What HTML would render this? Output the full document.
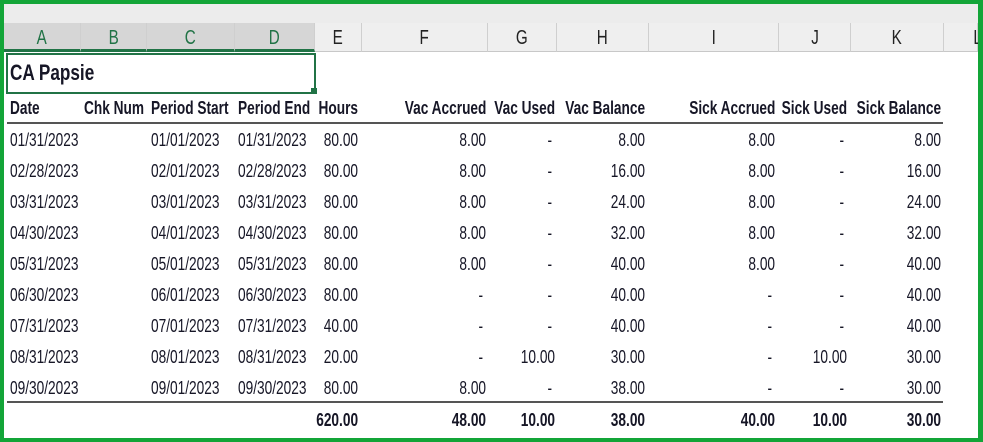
<!DOCTYPE html>
<html><head><meta charset="utf-8"><style>
body{margin:0;width:983px;height:442px;overflow:hidden;background:#fff;font-family:"Liberation Sans Narrow","Liberation Sans",sans-serif;color:#1a1a2a;}
.frame{position:absolute;left:0;top:0;width:983px;height:442px;box-sizing:border-box;border:4px solid #13a538;border-right-width:5px;}
.top{position:absolute;left:4px;top:4px;width:974px;height:19px;background:#ececec;}
.hdr{position:absolute;top:23px;height:29px;background:#efefef;border-bottom:1px solid #c8c8c8;border-right:1px solid #cfcfcf;box-sizing:border-box;text-align:center;font-size:20px;line-height:30px;color:#222;}
.hdr span{display:inline-block;transform:scaleX(0.76);}
.sel{background:#d6d6d6;color:#217346;border-bottom:3px solid #217346;}
.t{position:absolute;font-size:18px;white-space:nowrap;line-height:20px;transform:scaleX(0.76);transform-origin:left center;color:#161626;}
.b{font-weight:bold;}
.r{text-align:right;transform-origin:right center;}
</style></head><body>
<div class="top"></div>
<div class="hdr sel" style="left:4px;width:77px"><span>A</span></div>
<div class="hdr sel" style="left:81px;width:66px"><span>B</span></div>
<div class="hdr sel" style="left:147px;width:88px"><span>C</span></div>
<div class="hdr sel" style="left:235px;width:80px"><span>D</span></div>
<div class="hdr" style="left:315px;width:47px"><span>E</span></div>
<div class="hdr" style="left:362px;width:126px"><span>F</span></div>
<div class="hdr" style="left:488px;width:69px"><span>G</span></div>
<div class="hdr" style="left:557px;width:92px"><span>H</span></div>
<div class="hdr" style="left:649px;width:130px"><span>I</span></div>
<div class="hdr" style="left:779px;width:72px"><span>J</span></div>
<div class="hdr" style="left:851px;width:93px"><span>K</span></div>
<div class="hdr" style="left:944px;width:34px;text-align:left;padding-left:28px"><span>L</span></div>
<div style="position:absolute;left:6px;top:53px;width:306px;height:37px;border:2px solid #217346;"></div>
<div style="position:absolute;left:311px;top:88px;width:6px;height:6px;background:#217346;"></div>
<div class="t b" style="left:10px;top:61px;font-size:22px;line-height:24px;transform:scaleX(0.78)">CA Papsie</div>
<div style="position:absolute;left:7px;top:122px;width:936px;height:2px;background:#555"></div>
<div style="position:absolute;left:7px;top:401px;width:936px;height:2px;background:#555"></div>
<div id="g"></div>
<script>
var cols=[[10,'l'],[84,'l'],[151,'l'],[238,'l'],[358,'r'],[486,'r'],[555,'r'],[645,'r'],[775,'r'],[847,'r'],[941,'r']];
var hdr=['Date','Chk Num','Period Start','Period End','Hours','Vac Accrued','Vac Used','Vac Balance','Sick Accrued','Sick Used','Sick Balance'];
var rows=[
['01/31/2023','','01/01/2023','01/31/2023','80.00','8.00','-','8.00','8.00','-','8.00'],
['02/28/2023','','02/01/2023','02/28/2023','80.00','8.00','-','16.00','8.00','-','16.00'],
['03/31/2023','','03/01/2023','03/31/2023','80.00','8.00','-','24.00','8.00','-','24.00'],
['04/30/2023','','04/01/2023','04/30/2023','80.00','8.00','-','32.00','8.00','-','32.00'],
['05/31/2023','','05/01/2023','05/31/2023','80.00','8.00','-','40.00','8.00','-','40.00'],
['06/30/2023','','06/01/2023','06/30/2023','80.00','-','-','40.00','-','-','40.00'],
['07/31/2023','','07/01/2023','07/31/2023','40.00','-','-','40.00','-','-','40.00'],
['08/31/2023','','08/01/2023','08/31/2023','20.00','-','10.00','30.00','-','10.00','30.00'],
['09/30/2023','','09/01/2023','09/30/2023','80.00','8.00','-','38.00','-','-','30.00']];
var tot=['','','','','620.00','48.00','10.00','38.00','40.00','10.00','30.00'];
var h='';
function row(a,y,b){for(var i=0;i<a.length;i++){if(!a[i])continue;var c=cols[i];var txt=a[i];var x=c[0];
if(c[1]=='l')h+='<div class="t'+(b?' b':'')+'" style="left:'+x+'px;top:'+y+'px">'+txt+'</div>';
else{var dx=(txt=='-')?3:0;h+='<div class="t r'+(b?' b':'')+'" style="right:'+(983-x+dx)+'px;top:'+y+'px">'+txt+'</div>';}}}
row(hdr,98,true);
for(var k=0;k<rows.length;k++)row(rows[k],130+k*31,false);
row(tot,410,true);
document.getElementById('g').innerHTML=h;
</script>
<div class="frame"></div>
</body></html>
